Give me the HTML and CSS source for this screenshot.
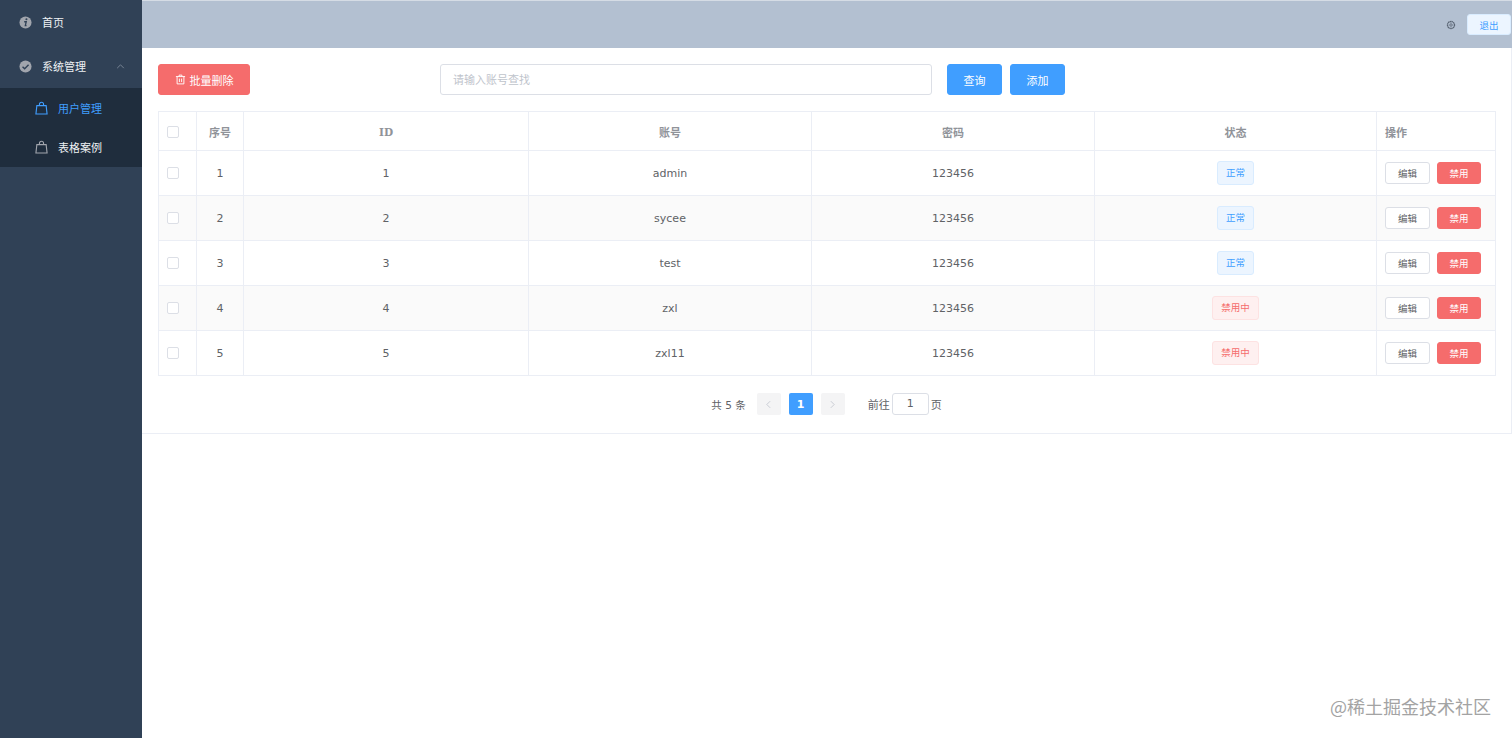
FILE: index.html
```html
<!DOCTYPE html>
<html lang="zh-CN">
<head>
  <meta charset="UTF-8">
  <meta name="viewport" content="width=device-width, initial-scale=1.0">
  <title>用户管理</title>
  <link rel="stylesheet" href="styles.css">
</head>
<body>
  <aside class="sidebar">
    <div class="menu-item home">
      <svg class="menu-icon" viewBox="0 0 14 14"><circle cx="7" cy="7" r="6.5" fill="#a1a5ad"/><circle cx="8" cy="3.6" r="1.1" fill="#304156"/><path d="M5.600 6.200h2.200L6.800 10.300h1.300" fill="none" stroke="#304156" stroke-width="1.4"/></svg>
      <span>首页</span>
    </div>
    <div class="menu-item system">
      <svg class="menu-icon" viewBox="0 0 14 14"><circle cx="7" cy="7" r="6.5" fill="#a1a5ad"/><path d="M3.800 7.200l2.300 2.300 4.200-4.300" fill="none" stroke="#304156" stroke-width="1.500"/></svg>
      <span>系统管理</span>
      <svg class="arrow" viewBox="0 0 10 6"><path d="M1 5l4-4 4 4" fill="none" stroke="#8490a0" stroke-width="1"/></svg>
    </div>
    <div class="submenu">
      <div class="sub-item active">
        <svg class="bag" viewBox="0 0 14 14"><path d="M2 4.500h10l1 9H1z M4.800 4.500V3a2.200 2.200 0 0 1 4.400 0v1.500" fill="none" stroke="currentColor" stroke-width="1.200"/></svg>
        <span>用户管理</span>
      </div>
      <div class="sub-item">
        <svg class="bag dim" viewBox="0 0 14 14"><path d="M2 4.500h10l1 9H1z M4.800 4.500V3a2.200 2.200 0 0 1 4.400 0v1.500" fill="none" stroke="currentColor" stroke-width="1.200"/></svg>
        <span>表格案例</span>
      </div>
    </div>
  </aside>

  <div class="content">
    <header class="topbar">
      <svg class="gear" viewBox="0 0 12 12"><circle cx="6" cy="6" r="4.200" fill="none" stroke="#5b6675" stroke-width="1.600" stroke-dasharray="1.800 .4"/><circle cx="6" cy="6" r="1.500" fill="none" stroke="#5b6675" stroke-width="1"/></svg>
      <button class="logout">退出</button>
    </header>

    <main class="panel">
      <div class="toolbar">
        <button class="btn btn-danger batch">
          <svg class="trash" viewBox="0 0 12 12"><path d="M1 2.800h10M4.500 2.800V1.200h3v1.600M2.300 2.800v8h7.400v-8M4.800 5v3.800M7.200 5v3.800" fill="none" stroke="#fff" stroke-width="1"/></svg>
          批量删除
        </button>
        <div class="search">请输入账号查找</div>
        <button class="btn btn-primary">查询</button>
        <button class="btn btn-primary">添加</button>
      </div>

      <table class="grid">
        <colgroup>
          <col class="c-check"><col class="c-no"><col class="c-id"><col class="c-a"><col class="c-a"><col class="c-s"><col class="c-op">
        </colgroup>
        <thead>
          <tr>
            <th><i class="check"></i></th>
            <th>序号</th>
            <th class="latin">ID</th>
            <th>账号</th>
            <th>密码</th>
            <th>状态</th>
            <th class="left">操作</th>
          </tr>
        </thead>
        <tbody>
          <tr>
            <td><i class="check"></i></td><td>1</td><td>1</td><td>admin</td><td>123456</td>
            <td><span class="tag">正常</span></td>
            <td class="left"><button class="mini">编辑</button><button class="mini red">禁用</button></td>
          </tr>
          <tr class="stripe">
            <td><i class="check"></i></td><td>2</td><td>2</td><td>sycee</td><td>123456</td>
            <td><span class="tag">正常</span></td>
            <td class="left"><button class="mini">编辑</button><button class="mini red">禁用</button></td>
          </tr>
          <tr>
            <td><i class="check"></i></td><td>3</td><td>3</td><td>test</td><td>123456</td>
            <td><span class="tag">正常</span></td>
            <td class="left"><button class="mini">编辑</button><button class="mini red">禁用</button></td>
          </tr>
          <tr class="stripe">
            <td><i class="check"></i></td><td>4</td><td>4</td><td>zxl</td><td>123456</td>
            <td><span class="tag off">禁用中</span></td>
            <td class="left"><button class="mini">编辑</button><button class="mini red">禁用</button></td>
          </tr>
          <tr>
            <td><i class="check"></i></td><td>5</td><td>5</td><td>zxl11</td><td>123456</td>
            <td><span class="tag off">禁用中</span></td>
            <td class="left"><button class="mini">编辑</button><button class="mini red">禁用</button></td>
          </tr>
        </tbody>
      </table>

      <div class="pager">
        <span class="total">共 5 条</span>
        <span class="page-btn"><svg viewBox="0 0 6 10"><path d="M5 1L1 5l4 4" fill="none" stroke="#c0c4cc" stroke-width="1"/></svg></span>
        <span class="page-btn current">1</span>
        <span class="page-btn"><svg viewBox="0 0 6 10"><path d="M1 1l4 4-4 4" fill="none" stroke="#c0c4cc" stroke-width="1"/></svg></span>
        <span class="jump">前往</span>
        <span class="page-input">1</span>
        <span>页</span>
      </div>
    </main>
  </div>

  <div class="watermark">@稀土掘金技术社区</div>
</body>
</html>
```

FILE: styles.css
```css
html, body {
  height: 100%;
}
body {
  margin: 0;
  display: flex;
  overflow: hidden;
  position: relative;
  background: #fff;
  color: #606266;
  font-family: "DejaVu Sans", "Noto Sans CJK SC", sans-serif;
  font-size: 11px;
}
button {
  font-family: inherit;
  cursor: pointer;
}

/* sidebar */
.sidebar {
  width: 142px;
  flex: none;
  background: #304156;
}
.menu-item {
  display: flex;
  align-items: center;
  height: 44px;
  padding-left: 19px;
  color: #eef1f4;
  font-size: 11px;
}
.menu-icon {
  width: 13px;
  height: 13px;
  margin-right: 10px;
}
.arrow {
  width: 9px;
  height: 5px;
  margin-left: 30px;
}
.submenu {
  background: #1f2d3d;
}
.sub-item {
  display: flex;
  align-items: center;
  height: 39.5px;
  padding-left: 35px;
  color: #eef1f4;
}
.sub-item.active {
  color: #409eff;
}
.bag {
  width: 13px;
  height: 14px;
  margin-right: 10px;
}
.bag.dim {
  color: #a1a5ad;
}

/* header */
.content {
  flex: 1;
  min-width: 0;
}
.topbar {
  height: 47px;
  border-top: 1px solid #d5dce5;
  background: #b3c0d1;
  display: flex;
  align-items: center;
  justify-content: flex-end;
  padding-right: 1px;
}
.gear {
  width: 10px;
  height: 10px;
  margin-right: 11px;
}
.logout {
  width: 44px;
  height: 21px;
  padding: 0;
  border: 1px solid #d9ecff;
  border-radius: 3px;
  background: #ecf5ff;
  color: #409eff;
  font-size: 9.5px;
}

/* main */
.panel {
  box-sizing: border-box;
  height: 386px;
  padding: 16px 16px 0;
  border-right: 1px solid #ebeef5;
  border-bottom: 1px solid #ebeef5;
}
.toolbar {
  display: flex;
  align-items: flex-start;
  height: 47px;
}
.btn {
  height: 31px;
  padding: 0;
  border-radius: 3px;
  color: #fff;
  font-size: 11px;
}
.btn-danger {
  width: 92px;
  background: #f56c6c;
  border: 1px solid #f56c6c;
  display: flex;
  align-items: center;
  justify-content: center;
}
.btn-primary {
  width: 55px;
  background: #409eff;
  border: 1px solid #409eff;
  margin-right: 8px;
}
.trash {
  width: 11px;
  height: 11px;
  margin-right: 4px;
}
.batch {
  margin-right: 190px;
}
.search {
  box-sizing: border-box;
  width: 492px;
  height: 31px;
  line-height: 31px;
  margin-right: 15px;
  padding-left: 12px;
  border: 1px solid #dcdfe6;
  border-radius: 3px;
  color: #c0c4cc;
  font-size: 11px;
}

/* table */
.grid {
  width: 1337px;
  table-layout: fixed;
  border-collapse: collapse;
  border: 1px solid #ebeef5;
}
.c-check { width: 38px; }
.c-no { width: 47px; }
.c-id { width: 285px; }
.c-a { width: 283px; }
.c-s { width: 282px; }
.c-op { width: 119px; }
th, td {
  padding: 0;
  border: 1px solid #ebeef5;
  text-align: center;
  font-weight: normal;
}
th {
  height: 37px;
  padding-top: 1px;
  color: #909399;
  font-size: 11px;
  font-weight: bold;
}
th.latin {
  font-family: "DejaVu Serif", serif;
  font-size: 10.5px;
}
td {
  height: 44px;
  font-size: 11px;
}
th.left, td.left {
  text-align: left;
  padding-left: 8px;
}
.stripe td {
  background: #fafafa;
}
.check {
  display: block;
  width: 10px;
  height: 10px;
  margin-left: 8px;
  border: 1px solid #dcdfe6;
  border-radius: 2px;
  background: #fff;
}
.tag {
  display: inline-block;
  height: 24px;
  line-height: 22px;
  padding: 0 8px;
  box-sizing: border-box;
  border: 1px solid #d9ecff;
  border-radius: 3px;
  background: #ecf5ff;
  color: #409eff;
  font-size: 9.5px;
  vertical-align: middle;
}
.tag.off {
  border-color: #fde2e2;
  background: #fef0f0;
  color: #f56c6c;
}
.mini {
  width: 45px;
  height: 22px;
  padding: 0;
  border: 1px solid #dcdfe6;
  border-radius: 3px;
  background: #fff;
  color: #606266;
  font-size: 9.5px;
  vertical-align: middle;
}
.mini.red {
  width: 44px;
  margin-left: 7px;
  border-color: #f56c6c;
  background: #f56c6c;
  color: #fff;
}

/* pager */
.pager {
  display: flex;
  align-items: center;
  justify-content: center;
  height: 22px;
  margin-top: 17px;
  font-size: 11px;
}
.total {
  margin-right: 11px;
  font-size: 10.5px;
}
.page-btn {
  display: flex;
  align-items: center;
  justify-content: center;
  width: 24px;
  height: 22px;
  margin-right: 8px;
  border-radius: 2px;
  background: #f4f4f5;
}
.page-btn svg {
  width: 5px;
  height: 9px;
}
.page-btn.current {
  background: #409eff;
  color: #fff;
  font-weight: bold;
}
.jump {
  margin-left: 15px;
}
.page-input {
  box-sizing: border-box;
  width: 37px;
  height: 22px;
  line-height: 20px;
  margin: 0 2px;
  border: 1px solid #dcdfe6;
  border-radius: 3px;
  text-align: center;
}

.watermark {
  position: absolute;
  right: 21px;
  bottom: 21px;
  color: #a3a3a3;
  font-family: "Noto Sans CJK SC", sans-serif;
  font-size: 18px;
  line-height: 22px;
}
```
